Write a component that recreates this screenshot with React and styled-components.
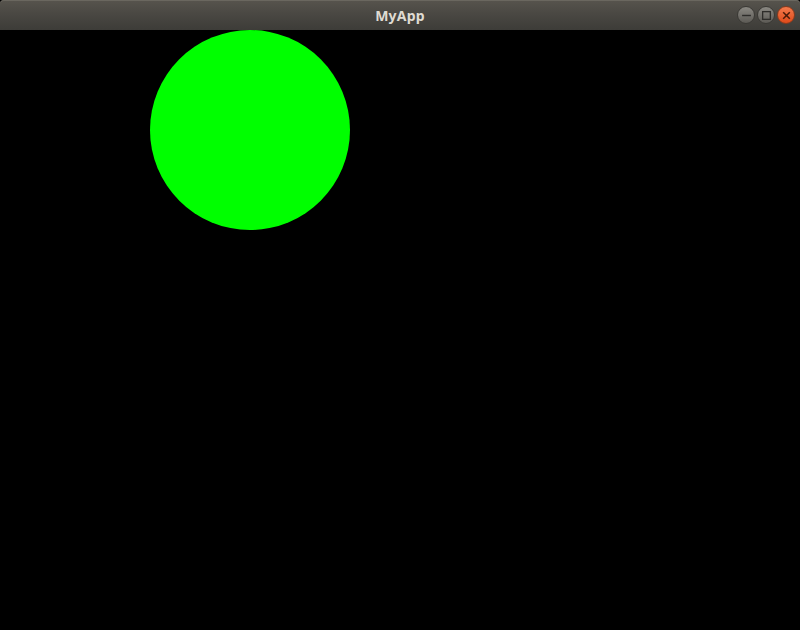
import styled, { createGlobalStyle } from "styled-components";

const GlobalStyle = createGlobalStyle`
  html, body {
    margin: 0;
    padding: 0;
    background: #000;
  }
  body {
    font-family: "Noto Sans", "DejaVu Sans", sans-serif;
  }
`;

const Window = styled.div`
  width: 800px;
  height: 630px;
  display: flex;
  flex-direction: column;
  background: #000;
  overflow: hidden;
`;

const TitleBar = styled.div`
  height: 30px;
  flex-shrink: 0;
  position: relative;
  display: flex;
  align-items: center;
  justify-content: center;
  background: linear-gradient(to bottom, #57544d 0%, #4a4843 45%, #3d3c38 100%);
  border-radius: 4px 4px 0 0;
  box-shadow: inset 0 1px 0 #6a675f;
`;

const Title = styled.span`
  color: #dfdbd2;
  font-size: 14px;
  font-weight: 700;
  letter-spacing: 0.2px;
  margin-top: 1px;
`;

const Controls = styled.div`
  position: absolute;
  right: 5px;
  top: 6px;
  display: flex;
  gap: 2px;
`;

const ControlButton = styled.div`
  width: 18px;
  height: 18px;
  border-radius: 50%;
  box-sizing: border-box;
  display: flex;
  align-items: center;
  justify-content: center;
  border: 1px solid ${(p) => (p.$close ? "#8a3a1c" : "#3a3935")};
  background: ${(p) =>
    p.$close
      ? "linear-gradient(to bottom, #f47a4c, #df4a1a)"
      : "linear-gradient(to bottom, #8a8882, #5c5a55)"};
`;

const Canvas = styled.div`
  flex: 1;
  position: relative;
  background: #000;
`;

const Ball = styled.div`
  position: absolute;
  left: ${(p) => p.$x - p.$r}px;
  top: ${(p) => p.$y - p.$r}px;
  width: ${(p) => p.$r * 2}px;
  height: ${(p) => p.$r * 2}px;
  border-radius: 50%;
  background: #00ff00;
`;

const Glyph = ({ kind }) => (
  <svg width="11" height="11" viewBox="0 0 10 10">
    {kind === "min" && (
      <line x1="1" y1="5" x2="9" y2="5" stroke="#2e2d2a" strokeWidth="1.3" />
    )}
    {kind === "max" && (
      <rect x="1.5" y="1.5" width="7" height="7" fill="none" stroke="#2e2d2a" strokeWidth="1.2" />
    )}
    {kind === "close" && (
      <g stroke="#4a1a08" strokeWidth="1.4">
        <line x1="2" y1="2" x2="8" y2="8" />
        <line x1="8" y1="2" x2="2" y2="8" />
      </g>
    )}
  </svg>
);

export default function App() {
  return (
    <>
      <GlobalStyle />
      <Window>
        <TitleBar>
          <Title>MyApp</Title>
          <Controls>
            <ControlButton>
              <Glyph kind="min" />
            </ControlButton>
            <ControlButton>
              <Glyph kind="max" />
            </ControlButton>
            <ControlButton $close>
              <Glyph kind="close" />
            </ControlButton>
          </Controls>
        </TitleBar>
        <Canvas>
          <Ball $x={250} $y={100} $r={100} />
        </Canvas>
      </Window>
    </>
  );
}
